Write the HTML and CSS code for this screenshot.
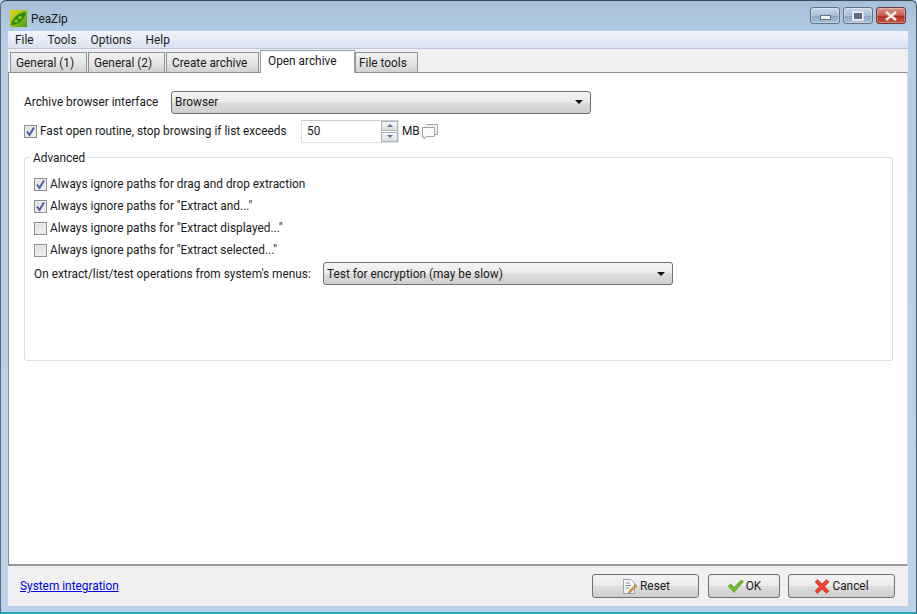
FILE: index.html
```html
<!DOCTYPE html>
<html lang="en">
<head>
<meta charset="utf-8">
<title>PeaZip</title>
<link rel="stylesheet" href="styles.css">
</head>
<body>
<div class="window">
  <header class="titlebar">
    <svg class="app-icon" width="17" height="17" viewBox="0 0 17 17"><defs><linearGradient id="lg" x1="0" y1="0" x2="1" y2="1"><stop offset="0" stop-color="#f4d21f"/><stop offset=".55" stop-color="#8fbf14"/><stop offset="1" stop-color="#3f9a0c"/></linearGradient></defs><rect width="17" height="17" fill="url(#lg)"/><path d="M1 15C2 8 9 2 16 2C15 9 9 15 1 15Z" fill="#2f8a10"/><ellipse cx="6" cy="11" rx="1.8" ry="1.6" fill="#8ad02a"/><ellipse cx="10" cy="7.5" rx="1.8" ry="1.6" fill="#8ad02a"/></svg>
    <span class="app-title">PeaZip</span>
    <div class="win-btns">
      <span class="win-btn"><i class="glyph-min"></i></span>
      <span class="win-btn"><i class="glyph-max"></i></span>
      <span class="win-btn close"><svg width="14" height="10" viewBox="0 0 14 10"><path d="M2 1L12 9M12 1L2 9" stroke="#eee" stroke-width="2.6"/></svg></span>
    </div>
  </header>
  <div class="client">
    <nav class="menubar"><span>File</span><span>Tools</span><span>Options</span><span>Help</span></nav>
    <div class="tabs">
      <span class="tab w1">General (1)</span>
      <span class="tab w1">General (2)</span>
      <span class="tab w2">Create archive</span>
      <span class="tab active">Open archive</span>
      <span class="tab w3">File tools</span>
    </div>
    <main class="page">
      <div class="row first">
        <label class="lbl-browser">Archive browser interface</label>
        <div class="select browser"><span>Browser</span><i class="arrow"></i></div>
      </div>
      <div class="row second">
        <span class="check on"><svg width="11" height="11" viewBox="0 0 11 11"><path d="M2 5.5L4.5 9L9 1.5" fill="none" stroke="#4a5fa8" stroke-width="2"/></svg></span>
        <span class="fast">Fast open routine, stop browsing if list exceeds</span>
        <div class="spin">
          <span class="spin-val">50</span>
          <div class="spin-btns"><i class="up"></i><i class="down"></i></div>
        </div>
        <span class="mb">MB</span>
        <svg class="bubble" width="18" height="17" viewBox="0 0 18 17"><path d="M5.5 1.5H16.5V11.5H14" fill="#f4f4f4" stroke="#9aa3a8"/><path d="M1.5 4.5H13.5V13.5H6L3 16V13.5H1.5Z" fill="#fafafa" stroke="#9aa3a8"/></svg>
      </div>
      <div class="group">
        <span class="legend">Advanced</span>
        <div class="opt"><span class="check on"><svg width="11" height="11" viewBox="0 0 11 11"><path d="M2 5.5L4.5 9L9 1.5" fill="none" stroke="#4a5fa8" stroke-width="2"/></svg></span>Always ignore paths for drag and drop extraction</div>
        <div class="opt"><span class="check on"><svg width="11" height="11" viewBox="0 0 11 11"><path d="M2 5.5L4.5 9L9 1.5" fill="none" stroke="#4a5fa8" stroke-width="2"/></svg></span>Always ignore paths for "Extract and..."</div>
        <div class="opt"><span class="check"></span>Always ignore paths for "Extract displayed..."</div>
        <div class="opt"><span class="check"></span>Always ignore paths for "Extract selected..."</div>
        <div class="opt-select">
          <label class="lbl-menus">On extract/list/test operations from system's menus:</label>
          <div class="select test"><span>Test for encryption (may be slow)</span><i class="arrow"></i></div>
        </div>
      </div>
    </main>
    <footer class="footer">
      <a class="link" href="#">System integration</a>
      <div class="actions">
        <button class="btn reset"><svg width="17" height="17" viewBox="0 0 17 17"><path d="M2.5 1.5H10L13.5 5V15.5H2.5Z" fill="#f4f6fa" stroke="#9aa4b4"/><path d="M4.5 5H9M4.5 7.5H10M4.5 10H8" stroke="#7f93ad"/><path d="M8 13L14.5 6.5L16 8L9.5 14.5L7.5 15Z" fill="#e8a33a" stroke="#8a6a30" stroke-width=".6"/></svg>Reset</button>
        <button class="btn ok"><svg width="17" height="14" viewBox="0 0 17 14"><path d="M1 7L4 5L7 8.5L14 1L16.5 2.5L7 13.5Z" fill="#6cbc2c" stroke="#559e1e" stroke-width=".6"/></svg>OK</button>
        <button class="btn cancel"><svg width="16" height="15" viewBox="0 0 16 15"><path d="M1 3L3.5 .6L8 4.8L12.5 .6L15 3L10.6 7.5L15 12L12.5 14.4L8 10.2L3.5 14.4L1 12L5.4 7.5Z" fill="#e8432c" stroke="#c8301c" stroke-width=".6"/></svg>Cancel</button>
      </div>
    </footer>
  </div>
</div>
</body>
</html>
```
FILE: styles.css
```css
* { box-sizing: border-box; }
html, body { margin: 0; height: 100%; overflow: hidden; background: #b9d1ea; }
body { font: 11.85px/16px Roboto, "Noto Sans", sans-serif; color: #1a1a1a; white-space: nowrap; }
.window {
  width: 917px; height: 614px; display: flex; flex-direction: column;
  border-top: 1px solid #3c4a58; border-left: 1px solid #5a6a78; border-right: 1px solid #4a5a68; border-bottom: 2px solid #2aa6b8;
  border-radius: 6px 6px 0 0;
  background: linear-gradient(180deg, #a7bfd8 0, #b6cfe8 40px, #bad2ec 100%);
}
.titlebar { height: 30px; flex: none; display: flex; align-items: center; padding: 0 10px 0 9px; }
.app-icon { margin-top: 4px; }
.app-title { margin: 5px 0 0 4px; }
.win-btns { margin-left: auto; display: flex; gap: 3px; margin-top: -1px; }
.win-btn {
  width: 30px; height: 17px; border: 1px solid #5f7288; border-radius: 3px;
  background: linear-gradient(180deg, #c8d9ea 0, #a9c0d8 50%, #8ca6c2 51%, #a8c0d8 100%);
  display: flex; align-items: center; justify-content: center; box-shadow: inset 0 0 0 1px rgba(255,255,255,.3);
}
.win-btn.close { background: linear-gradient(180deg, #dc9a90 0, #c8594c 50%, #b23020 51%, #c85040 100%); border-color: #6a3a3a; }
.glyph-min { width: 11px; height: 5px; background: #eef0f2; border: 1px solid #68727e; margin-top: 3px; }
.glyph-max { width: 12px; height: 10px; background: #5f6e7e; border: 1px solid #dde3e8; box-shadow: inset 0 0 0 1px #eef0f2; }
.client { flex: 1; margin: 0 8px 6px 7px; display: flex; flex-direction: column; min-height: 0; background: #f0f0f0; }
.menubar {
  height: 18px; flex: none; display: flex; gap: 14px; padding: 1px 0 0 7px;
  background: linear-gradient(180deg, #f1f5fb 0, #dbe3f1 100%); border-bottom: 1px solid #b8c4d8;
}
.tabs { height: 23px; flex: none; display: flex; align-items: flex-end; padding-left: 2px; gap: 1px; position: relative; z-index: 1; }
.tab {
  height: 20px; width: 77px; padding: 2px 0 0 5px; border: 1px solid #8e9296; border-bottom: 0;
  background: linear-gradient(180deg, #f2f2f2 0, #e6e6e6 50%, #d2d2d2 100%);
}
.tab.w2 { width: 93px; }
.tab.w3 { width: 63px; margin-left: -1px; padding-left: 3px; }
.tab.active { width: 95px; height: 23px; padding: 2px 0 0 7px; background: #fff; margin-bottom: -1px; border-color: #9aa0a4; }
.page {
  flex: 1; min-height: 0; background: #fff; border: 1px solid #8a8e92; border-width: 1px 0 2px 1px;
  border-bottom-color: #9a9a9a; border-right: 1px solid #d8d8d8; padding: 17px 15px 0 15px; display: flex; flex-direction: column;
}
.row { display: flex; align-items: center; }
.first { height: 24px; }
.lbl-browser { width: 147px; }
.select {
  height: 23px; border: 1px solid #707070; border-radius: 3px; display: flex; align-items: center; justify-content: space-between;
  padding: 0 3px; background: linear-gradient(180deg, #f4f4f4 0, #ebebeb 48%, #dcdcdc 52%, #cfcfcf 100%);
}
.select.browser { width: 420px; }
.select.test { width: 350px; }
.arrow { width: 0; height: 0; border: 4px solid transparent; border-top: 4px solid #111; border-bottom: 0; margin-right: 4px; }
.second { height: 24px; margin-top: 5px; }
.check {
  width: 13px; height: 13px; border: 1px solid #8e8f8f; flex: none; margin-right: 3px; display: flex; align-items: center; justify-content: center;
  background: linear-gradient(135deg, #dcdcdc 0, #f2f2f2 100%); box-shadow: inset 0 0 0 1px #eee;
}
.fast { width: 261px; }
.spin { width: 98px; height: 23px; border: 1px solid #dcdfe4; border-top-color: #c8ccd0; display: flex; align-items: center; justify-content: space-between; padding-left: 5px; }
.spin-btns { width: 17px; height: 21px; display: flex; flex-direction: column; gap: 1px; }
.spin-btns i { flex: 1; border: 1px solid #aeb4bc; background: linear-gradient(180deg, #f6f6f6, #dcdcdc); display: flex; align-items: center; justify-content: center; }
.spin-btns i::after { content: ""; border: 3px solid transparent; }
.spin-btns .up::after { border-bottom: 3px solid #5a6fb0; border-top: 0; }
.spin-btns .down::after { border-top: 3px solid #5a6fb0; border-bottom: 0; }
.mb { margin-left: 3px; }
.bubble { margin-left: 1px; }
.group {
  margin: 14px 0 0 0; padding: 15px 8px 0 9px; width: 869px; height: 204px; border: 1px solid #d5dfe5; border-radius: 3px; position: relative;
}
.legend { position: absolute; left: 5px; top: -8px; padding: 0 3px; background: #fff; }
.opt { height: 22px; display: flex; align-items: center; }
.opt-select { display: flex; align-items: center; margin-top: 1px; }
.lbl-menus { width: 289px; }
.footer { height: 40px; flex: none; display: flex; align-items: center; padding: 0 13px 0 12px; justify-content: space-between; }
.link { color: #0000e0; text-decoration: underline; }
.actions { display: flex; gap: 8px; }
.btn {
  height: 24px; border: 1px solid #707070; border-radius: 3px; font: inherit; color: inherit; padding: 0; display: flex; align-items: center; justify-content: center; gap: 2px;
  background: linear-gradient(180deg, #f3f3f3 0, #ebebeb 48%, #dddddd 52%, #cfcfcf 100%);
}
.reset { width: 107px; margin-right: 1px; }
.ok { width: 72px; }
.cancel { width: 107px; }
```
